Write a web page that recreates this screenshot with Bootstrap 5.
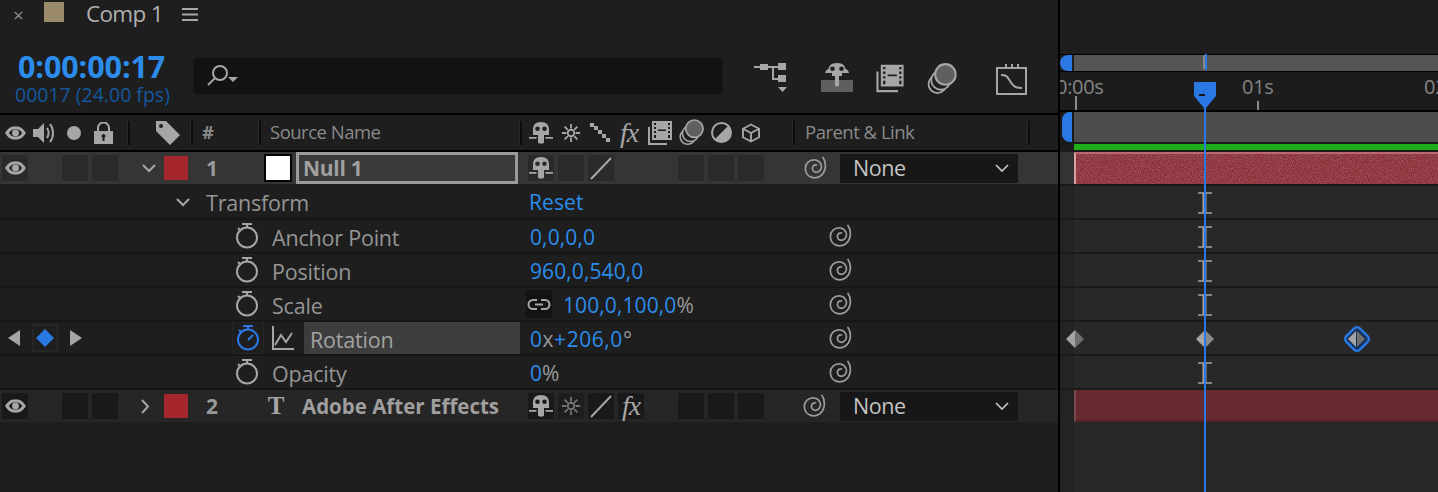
<!doctype html>
<html lang="en"><head><meta charset="utf-8"><title>Comp 1</title>
<link href="https://cdn.jsdelivr.net/npm/bootstrap@5.3.0/dist/css/bootstrap.min.css" rel="stylesheet">
<style>
html,body{height:492px;overflow:hidden;background:#1e1e1e}
body{font-family:"Open Sans","Noto Sans",sans-serif;color:#9a9a9a;font-size:20px;line-height:1}
svg{display:block;flex:none}
.ico{fill:#a6a6a6;stroke:none}
.lin{fill:none;stroke:#a6a6a6;stroke-width:2}
.app{width:1438px;height:492px;position:relative}
.lp{width:1060px;flex:none;border-right:2px solid #000;height:492px}
.rp{flex:1;min-width:0;padding-top:54px;overflow:hidden;position:relative;height:492px}
.tabbar{height:28px;padding-left:13px}
.tabx{width:12px;font-size:19px;color:#8c8c8c;margin-top:2px}
.swatch{width:20px;height:20px;background:#9b8a69;margin-left:19px;margin-top:-5px}
.tabname{font-size:22.5px;color:#b0b0b0;margin-left:22px;letter-spacing:-.7px}
.ham{margin-left:19px}
.tools{height:85px}
.timebox{width:193px;padding-left:15px;padding-top:23px}
.tc{font-size:30.5px;font-weight:700;color:#2b8ceb;letter-spacing:-.1px;padding-left:3px;line-height:30px;white-space:nowrap}
.fr{font-size:19.5px;color:#14589f;line-height:28px;white-space:nowrap}
.srch{width:530px;height:38px;background:#121212;border:1px solid #1a1a1a;border-radius:5px;margin-top:29px;padding-left:13px}
.hdr{height:39px;border-top:2px solid #000;border-bottom:2px solid #000;font-size:18.5px;color:#8a8a8a;letter-spacing:-.5px;white-space:nowrap}
.vd{width:3px;height:24px;background:#0c0c0c;flex:none;border-left:1px solid #2a2a2a}
.lay{height:32px;position:relative}
.lay1{background:#353535}
.lay2{background:#262626}
.cel{height:26px;width:26px;flex:none;background:#2a2a2a;display:flex;align-items:center;justify-content:center}
.lay2 .cel{background:#191919}
.lab{width:24px;height:24px;background:#a5262d;flex:none}
.num{font-size:21px;font-weight:700;color:#999;width:20px;text-align:center;flex:none}
.thumb{width:28px;height:28px;background:#fff;border:2px solid #000;flex:none}
.namebox{width:222px;height:32px;border:3px solid #9a9a9a;background:#3a3a3a;flex:none;font-weight:700;font-size:21px;color:#a0a0a0;padding-left:4px;letter-spacing:-.3px}
.nm2{font-weight:700;font-size:20.5px;color:#9f9f9f;white-space:nowrap;width:222px;flex:none}
.dd{width:178px;height:29px;background:#171717;flex:none;color:#c4c4c4;font-size:21.5px;padding-left:13px;letter-spacing:-.4px}
.prop{display:grid;grid-template-columns:226px 44px 250px 309px 1fr;height:34px;border-bottom:2px solid #161616;align-items:center}
.prop-t{height:36px;grid-template-columns:176px 30px 322px 1fr}
.prop-t>svg{margin-top:2px}
.pname{font-size:21.5px;color:#959595;letter-spacing:-.2px;padding-left:2px;padding-top:3px;white-space:nowrap}
.val{font-size:21px;color:#2b8ceb;letter-spacing:.1px;padding-left:10px;padding-top:2px;white-space:nowrap}
.vrot{letter-spacing:.55px}
.gry{color:#999}
.rot{background:#3d3d3d;height:32px;width:216px;font-size:21.5px;color:#a2a2a2;letter-spacing:-.2px;padding-left:6px;padding-top:3px;margin-left:10px}
.kcell{border:2px solid #262626;width:26px;height:28px}
.watch{width:32px;height:32px;border:1px solid #262626}
.link{width:26px;height:28px;background:#131313;margin-left:6px;margin-right:11px}
.nubA{width:12px;height:16px;background:#2a78e4;border-radius:8px 0 0 8px;flex:none}
.navbar-t{height:18px;border-top:1px solid #000;border-bottom:1px solid #000}
.navfill{flex:1;background:#555;margin-left:2px;position:relative;height:16px}
.ruler{height:40px;position:relative;background:#1c1c1c;overflow:hidden;color:#858585;font-size:20px;border-bottom:2px solid #000}
.tick{position:absolute;bottom:0;width:2px;background:#8a8a8a}
.rtx{position:absolute;top:5px;letter-spacing:-.3px}
.work{height:32px;background:#1a1a1a;padding-left:2px}
.nubB{width:10px;height:30px;background:#2a78e4;border-radius:8px 0 0 8px;flex:none}
.workbar{flex:1;height:30px;background:#4d4d4d;margin-left:2px}
.green{height:8px;background:#1b1b1b;padding-left:14px}
.green>div{height:6px;background:#20ae1c}
.trk{display:flex;border-bottom:2px solid #1a1a1a;height:34px}
.gp{width:14px;background:#232323;flex:none}
.gp1{background:#333}
.fill{flex:1;background:#282828;position:relative}
.bar1{background:#8c2f37;height:32px;border-top:2px solid #b86a70;border-left:2px solid #d9a0a3;position:relative;overflow:hidden}
.bar1 svg{position:absolute;inset:0}
.bar2{background:#672a2f;height:32px;border-bottom:2px solid #562126;border-left:2px solid #7a4a4d}
.ib{position:absolute;left:124px;top:6px}
.kf{position:absolute;top:17px;transform:translate(-50%,-50%)}
.head{position:absolute;left:134px;top:82px;width:22px;height:26px}
.phl{position:absolute;left:144px;top:108px;width:2px;bottom:0;background:#2a78e4}
.phm{position:absolute;left:145px;top:54px;width:2px;height:16px;background:#2a78e4}
.phg{position:absolute;left:143px;top:55px;width:2px;height:14px;background:#888}
.fx{font-family:"Liberation Serif",serif;font-style:italic;color:#a6a6a6;font-size:28px;line-height:24px;letter-spacing:-1px}
</style></head><body>
<svg width="0" height="0" style="position:absolute">
<defs>
<symbol id="eye" viewBox="0 0 22 14"><path class="ico" fill-rule="evenodd" d="M0 7C4 1 7 0 11 0s7 1 11 7c-4 6-7 7-11 7S4 13 0 7zM4 7c2 3 4 4 7 4s5-1 7-4c-2-3-4-4-7-4S6 4 4 7z"/><circle class="ico" cx="11" cy="7" r="3.6"/></symbol>
<symbol id="shy" viewBox="0 0 24 22"><path class="ico" fill-rule="evenodd" d="M12 0c5.500 0 8 3 8 7.500V13h-5v7.500c0 1.500-6 1.500-6 0V13H4V7.500C4 3 6.500 0 12 0zM8.500 4.500a2.300 2.300 0 100 4.600 2.300 2.300 0 000-4.600zm7 0a2.300 2.300 0 100 4.600 2.300 2.300 0 000-4.600z"/><path class="ico" d="M0 15h7.500v1.800H0zM16.500 15H24v1.800h-7.500z"/></symbol>
<symbol id="sun" viewBox="0 0 22 22"><circle class="lin" cx="11" cy="11" r="3.600"/><path class="lin" d="M11 1v5M11 16v5M1 11h5M16 11h5M4 4l3.500 3.500M14.500 14.500L18 18M18 4l-3.500 3.500M7.500 14.500L4 18"/></symbol>
<symbol id="film" viewBox="0 0 24 24"><path class="ico" fill-rule="evenodd" d="M4 0h20v19H4zM6 2v2h2V2zm0 4v2h2V6zm0 4v2h2v-2zm0 4v3h2v-3zM20 2v2h2V2zm0 4v2h2V6zm0 4v2h2v-2zm0 4v3h2v-3zM10 8.500v1.500h8V8.500z"/><path class="lin" d="M1 6v17h18"/></symbol>
<symbol id="coins" viewBox="0 0 26 28"><circle cx="9" cy="18.500" r="7.800" fill="#1e1e1e" stroke="#a6a6a6" stroke-width="1.600"/><circle cx="12" cy="15" r="8.400" fill="#1e1e1e" stroke="#a6a6a6" stroke-width="1.600"/><circle cx="16" cy="10" r="9" fill="#5f5f5f" stroke="#a6a6a6" stroke-width="1.800"/></symbol>
<symbol id="spiral" viewBox="0 0 24 24"><path fill="none" stroke="#9c9c9c" stroke-width="1.700" stroke-linecap="round" d="M19 1.500c3.500 5 3.500 14-2.500 18.500-6 4-14 1-15-6C.5 7.500 6 3 11.500 4c5.500 1 7.500 7 4.500 10.500-2.500 3-7 2-7.500-1.500-.4-2.500 1.500-4.500 4-4"/></symbol>
<symbol id="watch" viewBox="0 0 24 27"><path class="lin" d="M7 1h10M12 1v4"/><circle class="lin" cx="12" cy="14.500" r="10"/><path class="lin" d="M3 5l3 3"/></symbol>
<symbol id="watchb" viewBox="0 0 24 27"><path fill="none" stroke="#2a78e4" stroke-width="2" d="M7 1h10M12 1v4M3 5l3 3M12 15l5-5"/><circle fill="none" stroke="#2a78e4" stroke-width="2" cx="12" cy="14.500" r="10"/></symbol>
<symbol id="ibeam" viewBox="0 0 14 22"><path fill="none" stroke="#a4a4a4" stroke-width="1.500" d="M0 1h14M0 21h14"/><path fill="none" stroke="#a4a4a4" stroke-width="4" d="M6.500 1v20"/></symbol>
</defs></svg>

<div class="app d-flex">
 <div class="lp d-flex flex-column">
  <div class="tabbar d-flex align-items-center">
   <span class="tabx">×</span><span class="swatch"></span><span class="tabname">Comp 1</span>
   <svg class="ham" width="16" height="13" viewBox="0 0 16 13"><path class="lin" stroke-width="1.500" d="M0 1h16M0 6.500h16M0 12h16"/></svg>
  </div>
  <div class="tools d-flex">
   <div class="timebox"><div class="tc">0:00:00:17</div><div class="fr">00017 (24.00 fps)</div></div>
   <div class="srch d-flex align-items-center">
    <svg width="34" height="24" viewBox="0 0 34 24"><circle class="lin" cx="13" cy="9" r="7"/><path class="lin" d="M8 14L1 21"/><path class="ico" d="M21 13h10l-5 5z"/></svg>
   </div>
   <div class="d-flex align-items-start" style="margin-top:35px">
    <svg style="margin-left:31px" width="34" height="32" viewBox="0 0 34 32"><path class="ico" d="M0 3h6v2H0zM6 1h8v6H6zM14 3h10v2H14zM18 3h2v14h-2zM18 15h6v2h-6zM24 0h8v7h-8zM24 12h8v7h-8zM24 24h9l-4.500 5z"/></svg>
    <svg style="margin-left:33px" width="32" height="29" viewBox="0 0 32 29"><path d="M0 17h32v12H0z" fill="#5f5f5f"/><path class="ico" fill-rule="evenodd" d="M16 0c6 0 8 3 8.500 6 2 .3 2.500 1.500 3.500 4H21v3h-3v9c0 2-4 2-4 0v-9h-3v-3H4c1-2.500 1.500-3.700 3.500-4C8 3 10 0 16 0zM11.500 3.500a2.300 2.300 0 100 4.600 2.300 2.300 0 000-4.600zm9 0a2.300 2.300 0 100 4.600 2.300 2.300 0 000-4.600z"/></svg>
    <svg style="margin-left:23px" width="28" height="31" viewBox="0 0 24 27"><use href="#film"/></svg>
    <svg style="margin-left:23px" width="30" height="32" viewBox="0 0 26 28"><use href="#coins"/></svg>
    <svg style="margin-left:39px" width="31" height="32" viewBox="0 0 31 32"><path class="lin" d="M1 5h29v26H1z"/><path class="lin" d="M10 1v4M22 1v4M16 1v4M1 12H0M1 20H0M5 12c5 0 6 1 9 6s5 7 12 7" stroke-width="1.800"/></svg>
   </div>
  </div>
  <div class="hdr d-flex align-items-center">
   <svg style="margin-left:5px" width="21" height="14" viewBox="0 0 22 14"><use href="#eye"/></svg>
   <svg style="margin-left:7px" width="24" height="24" viewBox="0 0 24 24"><path class="ico" d="M0 8h5l6-6v20l-6-6H0z"/><path class="lin" d="M14 7c2 3 2 7 0 10M17 3c4 5 4 13 0 18"/></svg>
   <svg style="margin-left:10px" width="14" height="14" viewBox="0 0 14 14"><circle class="ico" cx="7" cy="7" r="7"/></svg>
   <svg style="margin-left:13px" width="19" height="22" viewBox="0 0 19 22"><path class="lin" d="M4 10V6a5.500 5.500 0 0111 0v4" stroke-width="2.400"/><path class="ico" fill-rule="evenodd" d="M0 9h19v13H0zM9.500 12a2 2 0 00-1 3.700V19h2v-3.300a2 2 0 00-1-3.700z"/></svg>
   <span class="vd" style="margin-left:14px"></span>
   <svg style="margin-left:26px" width="24" height="24" viewBox="0 0 24 24"><path class="ico" fill-rule="evenodd" d="M0 0h10l14 14-10 10L0 10zM5 3a2 2 0 100 4 2 2 0 000-4z"/></svg>
   <span class="vd" style="margin-left:10px"></span>
   <span style="margin-left:9px;width:18px" class="flex-none fw-bold">#</span>
   <span class="vd" style="margin-left:38px"></span>
   <span style="margin-left:9px;width:249px" class="flex-none">Source Name</span>
   <span class="vd"></span>
   <svg style="margin-left:7px" width="24" height="22" viewBox="0 0 24 22"><use href="#shy"/></svg>
   <svg style="margin-left:8px" width="20" height="20" viewBox="0 0 22 22"><use href="#sun"/></svg>
   <svg style="margin-left:9px" width="20" height="20" viewBox="0 0 20 20"><path class="ico" d="M0 0h4v4H0zM4 3h4v4H4zM8 7h4v4H8zM12 11h4v4h-4zM16 15h4v4h-4z"/></svg>
   <span class="fx flex-none" style="margin-left:10px;width:22px">fx</span>
   <svg style="margin-left:6px" width="24" height="24" viewBox="0 0 24 24"><use href="#film"/></svg>
   <svg style="margin-left:7px" width="25" height="27" viewBox="0 0 26 28"><use href="#coins"/></svg>
   <svg style="margin-left:7px" width="21" height="21" viewBox="0 0 21 21"><circle cx="10.500" cy="10.500" r="9.500" fill="#1e1e1e" stroke="#a6a6a6" stroke-width="2"/><path class="ico" d="M17.500 3.500a9.900 9.900 0 01-14 14z"/></svg>
   <svg style="margin-left:10px" width="18" height="20" viewBox="0 0 19 20"><path class="lin" stroke-width="1.500" d="M9.500 1L18 5.500v9L9.500 19 1 14.500v-9zM1 5.500L9.500 10 18 5.500M9.500 10v9"/></svg>
   <span class="vd" style="margin-left:32px"></span>
   <span style="margin-left:10px;width:222px" class="flex-none">Parent &amp; Link</span>
   <span class="vd"></span>
  </div>
  <div class="lay lay1 d-flex align-items-center">
   <span class="cel" style="margin-left:2px"><svg width="21" height="14" viewBox="0 0 22 14"><use href="#eye"/></svg></span>
   <span class="cel" style="margin-left:34px"></span><span class="cel" style="margin-left:4px"></span>
   <svg style="margin-left:24px" width="14" height="9" viewBox="0 0 14 9"><path class="lin" stroke-width="1.700" d="M1 1l6 6 6-6"/></svg>
   <span class="lab" style="margin-left:8px"></span>
   <span class="num" style="margin-left:14px">1</span>
   <span class="thumb" style="margin-left:42px"></span>
   <span class="namebox d-flex align-items-center" style="margin-left:4px">Null 1</span>
   <span class="cel" style="margin-left:10px"><svg width="24" height="22" viewBox="0 0 24 22"><use href="#shy"/></svg></span>
   <span class="cel" style="margin-left:4px"></span>
   <span class="cel" style="margin-left:4px"><svg width="26" height="26" viewBox="0 0 26 26"><path class="lin" stroke-width="2.500" d="M3 24L23 3"/></svg></span>
   <span class="cel" style="margin-left:64px"></span><span class="cel" style="margin-left:4px"></span><span class="cel" style="margin-left:4px"></span>
   <svg style="margin-left:40px" width="24" height="24" viewBox="0 0 24 24"><use href="#spiral"/></svg>
   <span class="dd d-flex align-items-center justify-content-between" style="margin-left:12px">None<svg style="margin-right:9px" width="14" height="9" viewBox="0 0 14 9"><path fill="none" stroke="#c4c4c4" stroke-width="1.700" d="M1 1l6 6 6-6"/></svg></span>
  </div>
  <div class="prop prop-t">
   <span></span><svg width="14" height="9" viewBox="0 0 14 9"><path class="lin" stroke-width="1.700" d="M1 1l6 6 6-6"/></svg>
   <span class="pname" style="padding-left:0">Transform</span><span class="val" style="padding-left:1px">Reset</span>
  </div>
  <div class="prop"><span></span><svg width="24" height="27" viewBox="0 0 24 27" style="margin-left:9px"><use href="#watch"/></svg><span class="pname">Anchor Point</span><span class="val">0,0,0,0</span><svg width="24" height="24" viewBox="0 0 24 24"><use href="#spiral"/></svg></div>
  <div class="prop"><span></span><svg width="24" height="27" viewBox="0 0 24 27" style="margin-left:9px"><use href="#watch"/></svg><span class="pname">Position</span><span class="val">960,0,540,0</span><svg width="24" height="24" viewBox="0 0 24 24"><use href="#spiral"/></svg></div>
  <div class="prop"><span></span><svg width="24" height="27" viewBox="0 0 24 27" style="margin-left:9px"><use href="#watch"/></svg><span class="pname">Scale</span>
   <span class="d-flex align-items-center"><span class="link d-flex align-items-center justify-content-center"><svg width="24" height="13" viewBox="0 0 24 13"><path class="lin" stroke-width="2.200" d="M10 2H6a4.500 4.500 0 000 9h4M14 2h4a4.500 4.500 0 010 9h-4M8 6.500h8"/></svg></span><span class="val" style="padding-left:0">100,0,100,0<span class="gry">%</span></span></span>
   <svg width="24" height="24" viewBox="0 0 24 24"><use href="#spiral"/></svg></div>
  <div class="prop">
   <span class="d-flex align-items-center gap-2" style="padding-left:8px"><svg width="12" height="16" viewBox="0 0 12 16"><path class="ico" d="M12 0v16L0 8z"/></svg><span class="kcell d-flex align-items-center justify-content-center" style="margin:0 4px"><svg width="18" height="18" viewBox="0 0 18 18"><path fill="#2a78e4" d="M9 0l9 9-9 9-9-9z"/></svg></span><svg width="12" height="16" viewBox="0 0 12 16"><path class="ico" d="M0 0v16l12-8z"/></svg></span>
   <span class="watch d-flex align-items-center justify-content-center" style="margin-left:6px"><svg width="24" height="27" viewBox="0 0 24 27"><use href="#watchb"/></svg></span>
   <span class="d-flex align-items-center"><svg width="22" height="24" viewBox="0 0 22 24" style="margin-left:2px"><path class="lin" stroke-width="1.500" d="M1 0v23h21M3 19l6-10 5 7 6-9"/></svg><span class="rot d-flex align-items-center">Rotation</span></span>
   <span class="val vrot">0<span class="gry">x</span>+206,0<span class="gry">°</span></span><svg width="24" height="24" viewBox="0 0 24 24"><use href="#spiral"/></svg></div>
  <div class="prop"><span></span><svg width="24" height="27" viewBox="0 0 24 27" style="margin-left:9px"><use href="#watch"/></svg><span class="pname">Opacity</span><span class="val">0<span class="gry">%</span></span><svg width="24" height="24" viewBox="0 0 24 24"><use href="#spiral"/></svg></div>
  <div class="lay lay2 d-flex align-items-center">
   <span class="cel" style="margin-left:2px"><svg width="21" height="14" viewBox="0 0 22 14"><use href="#eye"/></svg></span>
   <span class="cel" style="margin-left:34px"></span><span class="cel" style="margin-left:4px"></span>
   <svg style="margin-left:23px" width="9" height="15" viewBox="0 0 9 15"><path class="lin" stroke-width="1.700" d="M1 1l6 6.500L1 14"/></svg>
   <span class="lab" style="margin-left:14px"></span>
   <span class="num" style="margin-left:14px">2</span>
   <span class="d-flex align-items-center justify-content-center flex-none" style="margin-left:44px;width:20px;font:700 25px 'Liberation Serif',serif;color:#a6a6a6">T</span>
   <span class="nm2" style="margin-left:16px">Adobe After Effects</span>
   <span class="cel" style="margin-left:4px"><svg width="24" height="22" viewBox="0 0 24 22"><use href="#shy"/></svg></span>
   <span class="cel" style="margin-left:4px;opacity:.6"><svg width="20" height="20" viewBox="0 0 22 22"><use href="#sun"/></svg></span>
   <span class="cel" style="margin-left:4px"><svg width="26" height="26" viewBox="0 0 26 26"><path class="lin" stroke-width="2.500" d="M3 24L23 3"/></svg></span>
   <span class="cel fx" style="margin-left:4px">fx</span>
   <span class="cel" style="margin-left:34px"></span><span class="cel" style="margin-left:4px"></span><span class="cel" style="margin-left:4px"></span>
   <svg style="margin-left:39px" width="24" height="24" viewBox="0 0 24 24"><use href="#spiral"/></svg>
   <span class="dd d-flex align-items-center justify-content-between" style="margin-left:13px">None<svg style="margin-right:9px" width="14" height="9" viewBox="0 0 14 9"><path fill="none" stroke="#c4c4c4" stroke-width="1.700" d="M1 1l6 6 6-6"/></svg></span>
  </div>
 </div>

 <div class="rp">
  <div class="navbar-t d-flex"><span class="nubA"></span><div class="navfill"></div></div>
  <div class="ruler">
   <span class="rtx" style="left:-4px">0:00s</span><span class="rtx" style="left:182px">01s</span><span class="rtx" style="left:364px">02s</span>
   <span class="tick" style="left:15px;height:14px"></span><span class="tick" style="left:197px;height:9px"></span>
  </div>
  <div class="work d-flex"><span class="nubB"></span><div class="workbar"></div></div>
  <div class="green"><div></div></div>
  <div class="trk"><span class="gp gp1"></span><div class="fill"><div class="bar1"><svg width="100%" height="32"><filter id="nz"><feTurbulence type="fractalNoise" baseFrequency=".9" numOctaves="2"/><feColorMatrix values="0 0 0 0 .35 0 0 0 0 .1 0 0 0 0 .12 2.400 0 0 0 -.9"/></filter><rect width="100%" height="32" filter="url(#nz)"/></svg></div></div></div>
  <div class="trk"><span class="gp"></span><div class="fill"><svg class="ib" width="14" height="22" viewBox="0 0 14 22"><use href="#ibeam"/></svg></div></div>
  <div class="trk"><span class="gp"></span><div class="fill"><svg class="ib" width="14" height="22" viewBox="0 0 14 22"><use href="#ibeam"/></svg></div></div>
  <div class="trk"><span class="gp"></span><div class="fill"><svg class="ib" width="14" height="22" viewBox="0 0 14 22"><use href="#ibeam"/></svg></div></div>
  <div class="trk"><span class="gp"></span><div class="fill"><svg class="ib" width="14" height="22" viewBox="0 0 14 22"><use href="#ibeam"/></svg></div></div>
  <div class="trk"><span class="gp"></span><div class="fill">
    <svg class="kf" style="left:1px" width="18" height="18" viewBox="0 0 18 18"><path fill="#a4a4a4" d="M9 0v18L0 9z"/><path fill="#6f6f6f" d="M9 0v18l9-9z"/></svg>
    <svg class="kf" style="left:131px" width="18" height="18" viewBox="0 0 18 18"><path fill="#a4a4a4" d="M9 0v18L0 9z"/><path fill="#8a8a8a" d="M9 0v18l9-9z"/></svg>
    <svg class="kf" style="left:283px" width="30" height="30" viewBox="0 0 30 30"><rect x="5.500" y="5.500" width="19" height="19" rx="4" transform="rotate(45 15 15)" fill="#15335c" stroke="#2a78e4" stroke-width="2.500"/><path fill="#a4a4a4" d="M14 7v16l-8-8z"/><path fill="#6f6f6f" d="M15 7v16l8-8z"/></svg>
  </div></div>
  <div class="trk"><span class="gp"></span><div class="fill"><svg class="ib" width="14" height="22" viewBox="0 0 14 22"><use href="#ibeam"/></svg></div></div>
  <div class="trk" style="height:32px;border-bottom:0"><span class="gp"></span><div class="fill"><div class="bar2"></div></div></div>
  <div class="d-flex" style="height:70px"><span class="gp"></span><div class="fill"></div></div>
  <span class="phg"></span><span class="phm"></span>
  <svg class="head" viewBox="0 0 22 26"><path fill="#2a78e4" d="M0 0h22v14l-10 12h-2L0 14z"/><path fill="none" stroke="#161616" stroke-width="2" d="M5 13h6"/></svg>
  <span class="phl"></span>
 </div>
</div>
</body></html>
